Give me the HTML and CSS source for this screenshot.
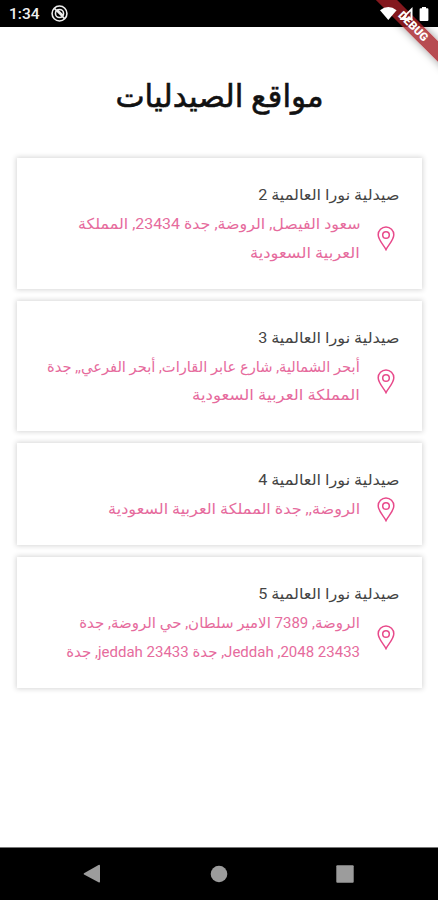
FILE: index.html
```html
<!DOCTYPE html>
<html lang="ar" dir="rtl">
<head>
  <meta charset="UTF-8" />
  <title>مواقع الصيدليات</title>
  <meta name="viewport" content="width=device-width, initial-scale=1.0" />
  <link rel="stylesheet" href="styles.css">
</head>
<body>
  <svg class="sprite" width="0" height="0">
    <symbol id="pin" viewBox="0 0 18 25">
      <path d="M9 23.600C7.200 19.700 1.200 14.200 1.200 8.800a7.800 7.800 0 0 1 15.600 0c0 5.400-6 10.900-7.800 14.800z" />
      <circle cx="9" cy="9" r="3.300" />
    </symbol>
  </svg>

  <header class="status-bar" dir="ltr">
    <span class="time">1:34</span>
    <svg class="dnd" width="17" height="17" viewBox="0 0 16 16">
      <circle cx="8" cy="8" r="7" />
      <circle cx="8" cy="8" r="3.800" />
      <path d="M3.200 3.200l9.600 9.600M6 4.500l5.500 5.500" />
    </svg>
    <svg class="system" width="50" height="16" viewBox="0 0 50 16">
      <path d="M0 4.200Q8.300-2 16.600 4.200L8.300 14z" />
      <path d="M32.500 1v13h-13zM30.500 5.500v6.500h-6.500z" fill-rule="evenodd" />
      <path d="M42 1h4v1.200h1.400q1 0 1 1V14q0 1-1 1h-6.800q-1 0-1-1V3.200q0-1 1-1H42z" />
    </svg>
  </header>
  <div class="debug" dir="ltr"><span>DEBUG</span></div>

  <main>
    <h1><span>مواقع الصيدليات</span></h1>

    <section class="card">
      <h2><span>صيدلية نورا العالمية 2</span></h2>
      <div class="place">
        <svg class="pin"><use href="#pin" /></svg>
        <p><span class="l1">سعود الفيصل, الروضة, جدة 23434, المملكة</span><span class="l2">العربية السعودية</span></p>
      </div>
    </section>

    <section class="card">
      <h2><span>صيدلية نورا العالمية 3</span></h2>
      <div class="place">
        <svg class="pin"><use href="#pin" /></svg>
        <p><span class="l3">أبحر الشمالية, شارع عابر القارات, أبحر الفرعي,, جدة</span><span class="l4">المملكة العربية السعودية</span></p>
      </div>
    </section>

    <section class="card">
      <h2><span>صيدلية نورا العالمية 4</span></h2>
      <div class="place">
        <svg class="pin"><use href="#pin" /></svg>
        <p><span class="l5">الروضة,, جدة المملكة العربية السعودية</span></p>
      </div>
    </section>

    <section class="card">
      <h2><span>صيدلية نورا العالمية 5</span></h2>
      <div class="place">
        <svg class="pin"><use href="#pin" /></svg>
        <p><span class="l6">الروضة, 7389 الامير سلطان, حي الروضة, جدة</span><span class="l7">23433 2048, Jeddah, جدة 23433 jeddah, جدة</span></p>
      </div>
    </section>
  </main>

  <footer class="nav-bar" dir="ltr">
    <svg width="18" height="20" viewBox="0 0 18 20"><path d="M1 9.200L15.500 1q1.500-.8 1.500 1v15.500q0 1.500-1.500.8L1 10.500q-.8-.6 0-1.300z" /></svg>
    <svg width="18" height="18" viewBox="0 0 18 18"><circle cx="9" cy="9" r="8.300" /></svg>
    <svg width="18" height="18" viewBox="0 0 18 18"><rect x=".3" y=".3" width="17.400" height="17.400" rx="1" /></svg>
  </footer>
</body>
</html>
```
FILE: styles.css
```css
* {
  box-sizing: border-box;
}
body {
  margin: 0;
  height: 900px;
  display: flex;
  flex-direction: column;
  overflow: hidden;
  background: #fff;
  font-family: Roboto, "DejaVu Sans", sans-serif;
}
.sprite {
  position: absolute;
}
.status-bar {
  height: 27px;
  flex: none;
  display: flex;
  align-items: center;
  padding: 0 8px 0 9px;
  background: #000;
  color: #eee;
}
.time {
  font: 500 15.5px Roboto, sans-serif;
  width: 42px;
}
.dnd {
  fill: none;
  stroke: #eee;
  stroke-width: 1.5;
}
.system {
  margin-left: auto;
  fill: #fff;
  z-index: 2;
}
.debug {
  position: absolute;
  top: 0;
  right: 0;
  width: 75px;
  height: 75px;
  overflow: hidden;
}
.debug span {
  position: absolute;
  top: 18px;
  left: -16px;
  width: 130px;
  height: 15px;
  padding-left: 3px;
  transform: rotate(45deg);
  background: rgba(165, 30, 38, 0.8);
  box-shadow: 0 0 8px rgba(0, 0, 0, 0.4);
  color: #fff;
  font: 900 11.5px/15px Roboto, sans-serif;
  text-align: center;
}
main {
  flex: 1;
  padding: 0 16px 0 17px;
}
h1 {
  margin: 0;
  height: 131px;
  line-height: 140px;
  font-size: 31px;
  font-weight: normal;
  text-align: center;
  color: #111;
  -webkit-text-stroke: 0.6px #111;
}
h1 span {
  display: inline-block;
  white-space: nowrap;
}
.card {
  margin-bottom: 12px;
  padding: 23px 22px 22px 23px;
  background: #fff;
  box-shadow: 0 0 5px 1px rgba(0, 0, 0, 0.16);
}
h2 {
  margin: 0;
  font-size: 15px;
  font-weight: normal;
  line-height: 28px;
  color: #444;
}
.place {
  display: flex;
  align-items: center;
  gap: 17px;
  padding-top: 1px;
  margin-bottom: -1px;
}
.pin {
  flex: none;
  width: 18px;
  height: 25px;
  margin-right: 5px;
  fill: none;
  stroke: #e84a8b;
  stroke-width: 1.5;
}
p {
  margin: 0;
  font-size: 15px;
  line-height: 28.8px;
  color: #e66b9d;
}
p span,
h2 span {
  display: block;
  width: max-content;
  white-space: nowrap;
  transform-origin: right center;
}
h2 span {
  transform: scaleX(1.075);
}
.l1 {
  transform: scaleX(1.06);
}
.l2 {
  transform: scaleX(1.09);
}
.l3 {
  transform: scaleX(0.978);
}
.l4 {
  transform: scaleX(1.105);
}
.l5 {
  transform: scaleX(1.072);
}
.nav-bar {
  flex: none;
  height: 53px;
  display: flex;
  align-items: center;
  justify-content: space-between;
  padding: 0 84px 0 83px;
  background: #000;
  border-top: 1px solid #777;
}
.nav-bar svg {
  fill: #9c9c9c;
}
```
